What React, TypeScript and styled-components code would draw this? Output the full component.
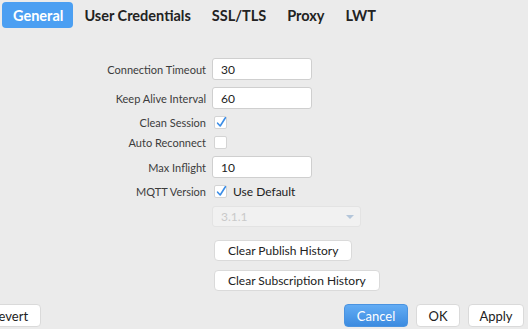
import React from "react";
import styled, { createGlobalStyle } from "styled-components";

const Global = createGlobalStyle`
  html, body { margin: 0; padding: 0; background: #ebebeb; }
  body { font-family: Lato, "Open Sans", sans-serif; color: #333; overflow: hidden; }
  * { box-sizing: border-box; }
`;

const Page = styled.div`
  height: 329px;
  display: flex;
  flex-direction: column;
`;

const TabBar = styled.div`
  display: flex;
  padding: 2px 2px 0;
`;

const Tab = styled.div<{ $active?: boolean }>`
  height: 26px;
  padding: 0 10px 0 11px;
  display: flex;
  align-items: center;
  font-size: 14.5px;
  font-weight: 700;
  color: ${(p) => (p.$active ? "#fff" : "#222")};
  background: ${(p) => (p.$active ? "#4b9ff2" : "transparent")};
  border-radius: 4px;
`;

const Form = styled.div`
  margin-top: 30px;
  display: grid;
  grid-template-columns: 206px 1fr;
  column-gap: 6px;
  row-gap: 7px;
  align-items: center;
`;

const Label = styled.div`
  text-align: right;
  font-size: 11px;
  line-height: 13px;
  color: #3c3c3c;
  white-space: nowrap;
`;

const Control = styled.div<{ $mt?: number }>`
  display: flex;
  align-items: center;
  margin-top: ${(p) => p.$mt ?? 0}px;
`;

const Input = styled.div`
  width: 100px;
  height: 22px;
  background: #fff;
  border: 1px solid #cfcfcf;
  border-radius: 3px;
  padding-left: 8px;
  display: flex;
  align-items: center;
  font-size: 12px;
  color: #222;
`;

const Check = styled.div`
  width: 13px;
  height: 13px;
  margin-left: 2px;
  background: #fff;
  border: 1px solid #d4d4d4;
  border-radius: 2px;
  position: relative;
  svg { position: absolute; left: 0px; top: -1px; }
`;

const CheckText = styled.span`
  margin-left: 6px;
  font-size: 12px;
  line-height: 13px;
  color: #222;
`;

const Select = styled.div`
  width: 149px;
  height: 21px;
  background: #f1f1f1;
  border: 1px solid #e3e3e3;
  border-radius: 3px;
  padding: 0 6px 0 8px;
  display: flex;
  align-items: center;
  justify-content: space-between;
  font-size: 12px;
  color: #c9c9c9;
`;

const Arrow = styled.div`
  width: 0;
  height: 0;
  border-left: 4px solid transparent;
  border-right: 4px solid transparent;
  border-top: 4px solid #b4c6da;
`;

const Button = styled.div<{ $primary?: boolean }>`
  height: 21px;
  padding: 0 13px;
  margin-left: 2px;
  display: inline-flex;
  align-items: center;
  justify-content: center;
  font-size: 12px;
  color: ${(p) => (p.$primary ? "#fff" : "#222")};
  background: ${(p) => (p.$primary ? "linear-gradient(#62acf4, #3c8be0)" : "#fff")};
  border: 1px solid ${(p) => (p.$primary ? "#4a93e0" : "#dadada")};
  border-radius: 4px;
  white-space: nowrap;
`;

const Footer = styled.div`
  margin-top: auto;
  padding: 0 4px 2px 0;
  display: flex;
  align-items: center;
  gap: 8px;
`;

const FootButton = styled(Button)<{ $w: number }>`
  height: 23px;
  width: ${(p) => p.$w}px;
  margin-left: 0;
  font-size: 13px;
  padding: 0;
`;

const RevertButton = styled(FootButton)`
  margin-left: -22px;
  margin-right: auto;
`;

const Tick = () => (
  <svg width="13" height="13" viewBox="0 0 13 13">
    <path d="M2.6 7.2 L5.2 10 L10.4 1.8" fill="none" stroke="#3b8de6" strokeWidth="1.6" strokeLinecap="round" strokeLinejoin="round" />
  </svg>
);

export default function App() {
  return (
    <Page>
      <Global />
      <TabBar>
        <Tab $active>General</Tab>
        <Tab>User Credentials</Tab>
        <Tab>SSL/TLS</Tab>
        <Tab>Proxy</Tab>
        <Tab>LWT</Tab>
      </TabBar>
      <Form>
        <Label>Connection Timeout</Label>
        <Control><Input>30</Input></Control>
        <Label>Keep Alive Interval</Label>
        <Control><Input>60</Input></Control>
        <Label>Clean Session</Label>
        <Control><Check><Tick /></Check></Control>
        <Label>Auto Reconnect</Label>
        <Control><Check /></Control>
        <Label>Max Inflight</Label>
        <Control><Input>10</Input></Control>
        <Label>MQTT Version</Label>
        <Control><Check><Tick /></Check><CheckText>Use Default</CheckText></Control>
        <div />
        <Control $mt={1}><Select>3.1.1<Arrow /></Select></Control>
        <div />
        <Control $mt={6}><Button>Clear Publish History</Button></Control>
        <div />
        <Control $mt={2}><Button>Clear Subscription History</Button></Control>
      </Form>
      <Footer>
        <RevertButton $w={63}>Revert</RevertButton>
        <FootButton $primary $w={64}>Cancel</FootButton>
        <FootButton $w={44}>OK</FootButton>
        <FootButton $w={56}>Apply</FootButton>
      </Footer>
    </Page>
  );
}
